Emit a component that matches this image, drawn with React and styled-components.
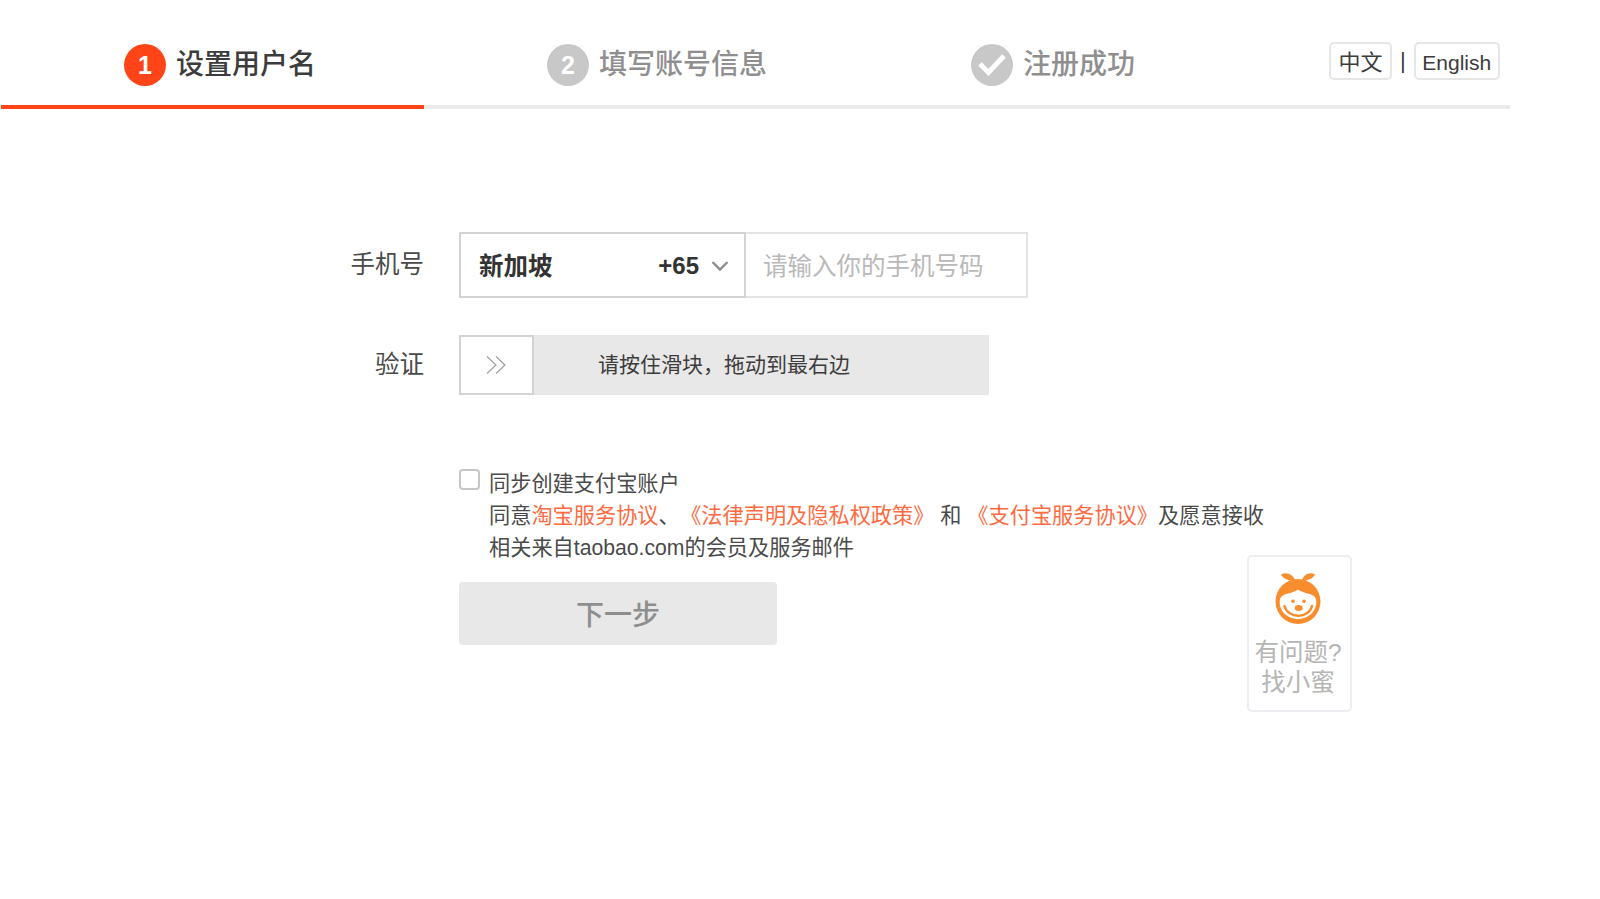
import React from "react";
import styled, { createGlobalStyle } from "styled-components";

const Global = createGlobalStyle`
  html, body { margin: 0; padding: 0; background: #fff; }
  body { font-family: "Liberation Sans", "Noto Sans CJK SC", sans-serif; color: #3c3c3c; }
  #root { width: 1600px; height: 899px; overflow: hidden; }
`;

const Page = styled.div`
  position: relative;
  width: 1600px;
  height: 899px;
`;

const Steps = styled.div`
  display: flex;
  width: 1509px;
  margin-left: 1px;
  padding-top: 44px;
  border-bottom: 4px solid #ebebeb;
`;

const Step = styled.div`
  display: flex;
  align-items: center;
  gap: 10px;
  width: ${p => p.$w};
  height: 61px;
  padding: 0 0 19px 123px;
  box-sizing: border-box;
  position: relative;
  font-size: 28px;
  font-weight: 500;
  line-height: 42px;
  color: ${p => (p.$active ? "#3c3c3c" : "#8f8f8f")};
  &::after {
    content: "";
    display: ${p => (p.$active ? "block" : "none")};
    position: absolute;
    left: 0;
    right: 0;
    bottom: -4px;
    height: 4px;
    background: #ff4517;
  }
`;

const StepBadge = styled.span`
  display: flex;
  align-items: center;
  justify-content: center;
  flex: none;
  width: 42px;
  height: 42px;
  border-radius: 50%;
  background: ${p => (p.$active ? "#ff4517" : "#c8c8c8")};
  color: #fff;
  font-family: "Liberation Sans", sans-serif;
  font-size: 25px;
  font-weight: 700;
`;

const LangBar = styled.div`
  position: absolute;
  left: 1329px;
  top: 42px;
  display: flex;
  align-items: center;
  gap: 8px;
  font-size: 22px;
`;

const LangButton = styled.button`
  height: 38px;
  width: ${p => p.$w}px;
  padding: ${p => p.$pad};
  box-sizing: border-box;
  background: #fff;
  border: 2px solid #e6e6e6;
  border-radius: 5px;
  font: inherit;
  font-size: ${p => p.$size}px;
  color: #3c3c3c;
`;

const Form = styled.div`
  padding: 123px 0 0 0;
`;

const Row = styled.div`
  display: flex;
  align-items: center;
  height: ${p => p.$h}px;
  margin-bottom: ${p => p.$mb || 0}px;
`;

const Label = styled.label`
  width: 424px;
  flex: none;
  text-align: right;
  font-size: 24.5px;
  color: #4a4a4a;
  padding-bottom: 6px;
`;

const Field = styled.div`
  margin-left: 35px;
  display: flex;
`;

const Select = styled.div`
  width: 287px;
  height: 66px;
  box-sizing: border-box;
  border: 2px solid #d3d3d3;
  display: flex;
  align-items: center;
  padding: 2px 15px 0 18px;
  font-size: 24px;
  font-weight: 700;
  color: #333;
`;

const Country = styled.span`
  flex: 1;
  font-size: 24.5px;
  padding-bottom: 4px;
`;

const Dial = styled.span`
  margin-right: 12px;
`;

const PhoneInput = styled.input`
  width: 282px;
  height: 66px;
  box-sizing: border-box;
  border: 2px solid #e4e4e4;
  border-left: 0;
  outline: 0;
  padding: 4px 0 0 17px;
  font: inherit;
  font-size: 24.5px;
  &::placeholder { color: #b9b9b9; opacity: 1; }
`;

const Slider = styled.div`
  width: 530px;
  height: 60px;
  background: #e8e8e8;
  display: flex;
  align-items: center;
  font-size: 21px;
  color: #3c3c3c;
`;

const Handle = styled.div`
  width: 75px;
  height: 60px;
  box-sizing: border-box;
  background: #fff;
  border: 2px solid #d3d3d3;
  display: flex;
  align-items: center;
  justify-content: center;
  margin-right: 64px;
`;

const SliderHint = styled.span`
  padding-bottom: 5px;
`;

const Agreement = styled.div`
  margin: 71px 0 0 459px;
  display: flex;
  align-items: flex-start;
  gap: 9px;
`;

const Check = styled.span`
  flex: none;
  width: 21px;
  height: 21px;
  box-sizing: border-box;
  border: 2px solid #c6c6c6;
  border-radius: 4px;
  margin-top: 3px;
`;

const AgreeText = styled.div`
  width: 820px;
  font-size: 21.2px;
  line-height: 32px;
  color: #4a4a4a;
  padding-top: 2px;
`;

const Link = styled.span`
  color: #ff6a40;
  margin-left: ${p => p.$gap || 0}px;
`;

const NextButton = styled.button`
  display: block;
  margin: 18px 0 0 459px;
  padding: 0 0 2px;
  width: 318px;
  height: 63px;
  border: 0;
  border-radius: 4px;
  background: #e8e8e8;
  color: #8e8e8e;
  font: inherit;
  font-size: 28px;
  font-weight: 500;
`;

const Helper = styled.div`
  position: absolute;
  left: 1247px;
  top: 555px;
  width: 105px;
  height: 157px;
  box-sizing: border-box;
  border: 2px solid #eeeef2;
  border-radius: 5px;
  background: #fff;
  padding: 11px 3px 0 0;
  display: flex;
  flex-direction: column;
  align-items: center;
  font-size: 24.5px;
  line-height: 30px;
  color: #b5b5b5;
  text-align: center;
`;

const HelperText = styled.div`
  margin-top: 10px;
  white-space: nowrap;
`;

const Chevron = () => (
  <svg width="18" height="12" viewBox="0 0 18 12" fill="none" stroke="#8c8c8c" strokeWidth="2.4">
    <path d="M1.5 2 L9 9.5 L16.5 2" />
  </svg>
);

const DoubleArrow = () => (
  <svg width="24" height="20" viewBox="0 0 24 20" fill="none" stroke="#a0a0a0" strokeWidth="1.2">
    <path d="M2 1.5 L11 10 L2 18.5" />
    <path d="M11 1.5 L20 10 L11 18.5" />
  </svg>
);

const CheckMark = () => (
  <svg width="30" height="24" viewBox="0 0 30 24" fill="none" stroke="#fff" strokeWidth="5">
    <path d="M3 11 L11.5 19.5 L27 3" />
  </svg>
);

const Mascot = () => (
  <svg width="60" height="60" viewBox="0 0 60 60" style={{ display: "block" }}>
    <path d="M13 6.5 C18 3.5 25 6 27.5 13 C21 12.5 15 11 13 6.5 Z" fill="#f78d2d" />
    <path d="M47 6.5 C42 3.5 36 6 33.5 13 C39 12.5 45 11 47 6.5 Z" fill="#f78d2d" />
    <circle cx="30" cy="33.5" r="22.5" fill="#f78d2d" />
    <path d="M12 31 C14 25 24 26 30 21.5 C36 26 46 25 48 31 C50 42 41 51 30 51 C19 51 10 42 12 31 Z" fill="#fff" />
    <circle cx="25" cy="33.3" r="1.8" fill="#f78d2d" />
    <circle cx="36" cy="33.3" r="1.8" fill="#f78d2d" />
    <ellipse cx="30.7" cy="40" rx="4" ry="3" fill="#f78d2d" />
    <path d="M16.5 38 C20 51 41 51 44 38" fill="none" stroke="#f78d2d" strokeWidth="2.4" strokeLinecap="round" />
  </svg>
);

export default function App() {
  return (
    <Page>
      <Global />
      <Steps>
        <Step $active $w="423px">
          <StepBadge $active>1</StepBadge>
          设置用户名
        </Step>
        <Step $w="424px">
          <StepBadge>2</StepBadge>
          填写账号信息
        </Step>
        <Step $w="auto">
          <StepBadge><CheckMark /></StepBadge>
          注册成功
        </Step>
      </Steps>
      <LangBar>
        <LangButton $w={63} $size={22} $pad="0 0 2px">中文</LangButton>
        <span>|</span>
        <LangButton $w={86} $size={21} $pad="3px 0 0">English</LangButton>
      </LangBar>
      <Form>
        <Row $h={66} $mb={37}>
          <Label>手机号</Label>
          <Field>
            <Select>
              <Country>新加坡</Country>
              <Dial>+65</Dial>
              <Chevron />
            </Select>
            <PhoneInput placeholder="请输入你的手机号码" />
          </Field>
        </Row>
        <Row $h={60}>
          <Label>验证</Label>
          <Field>
            <Slider>
              <Handle><DoubleArrow /></Handle>
              <SliderHint>请按住滑块，拖动到最右边</SliderHint>
            </Slider>
          </Field>
        </Row>
      </Form>
      <Agreement>
        <Check />
        <AgreeText>
          同步创建支付宝账户<br />
          同意<Link>淘宝服务协议</Link>、<Link $gap={11}>《法律声明及隐私权政策》</Link> 和 <Link>《支付宝服务协议》</Link>及愿意接收<br />
          相关来自taobao.com的会员及服务邮件
        </AgreeText>
      </Agreement>
      <NextButton>下一步</NextButton>
      <Helper>
        <Mascot />
        <HelperText>有问题?<br />找小蜜</HelperText>
      </Helper>
    </Page>
  );
}
